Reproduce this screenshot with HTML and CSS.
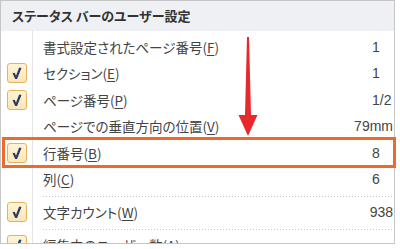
FILE: index.html
```html
<!DOCTYPE html>
<html lang="ja">

<head>
  <meta charset="UTF-8">
  <meta name="viewport" content="width=device-width, initial-scale=1.0">
  <title>ステータス バーのユーザー設定</title>
  <link rel="stylesheet" href="styles.css">
</head>

<body>

  <div class="shot">
    <div class="menu">
      <div class="menu-title">ステータス バーのユーザー設定</div>
      <ul class="menu-list">
        <li class="item">
          <span class="check"></span>
          <span class="label">書式設定されたページ番号(<u>F</u>)</span>
          <span class="value">1</span>
        </li>
        <li class="item">
          <span class="check on"><svg viewBox="0 0 20 20"><path d="M5 10.3 L7.5 9.6 L8.9 13 L12.4 4 L15 4.5 L10.1 16.6 L8 16.6 Z"/></svg></span>
          <span class="label">セクション(<u>E</u>)</span>
          <span class="value">1</span>
        </li>
        <li class="item">
          <span class="check on"><svg viewBox="0 0 20 20"><path d="M5 10.3 L7.5 9.6 L8.9 13 L12.4 4 L15 4.5 L10.1 16.6 L8 16.6 Z"/></svg></span>
          <span class="label">ページ番号(<u>P</u>)</span>
          <span class="value">1/2</span>
        </li>
        <li class="item">
          <span class="check"></span>
          <span class="label">ページでの垂直方向の位置(<u>V</u>)</span>
          <span class="value">79mm</span>
        </li>
        <li class="item">
          <span class="check on"><svg viewBox="0 0 20 20"><path d="M5 10.3 L7.5 9.6 L8.9 13 L12.4 4 L15 4.5 L10.1 16.6 L8 16.6 Z"/></svg></span>
          <span class="label">行番号(<u>B</u>)</span>
          <span class="value">8</span>
        </li>
        <li class="item">
          <span class="check"></span>
          <span class="label">列(<u>C</u>)</span>
          <span class="value">6</span>
        </li>
        <li class="sep"></li>
        <li class="item">
          <span class="check on"><svg viewBox="0 0 20 20"><path d="M5 10.3 L7.5 9.6 L8.9 13 L12.4 4 L15 4.5 L10.1 16.6 L8 16.6 Z"/></svg></span>
          <span class="label">文字カウント(<u>W</u>)</span>
          <span class="value">938</span>
        </li>
        <li class="sep"></li>
        <li class="item">
          <span class="check on"><svg viewBox="0 0 20 20"><path d="M5 10.3 L7.5 9.6 L8.9 13 L12.4 4 L15 4.5 L10.1 16.6 L8 16.6 Z"/></svg></span>
          <span class="label">編集中のユーザー数(<u>A</u>)</span>
          <span class="value"></span>
        </li>
      </ul>
    </div>

    <!-- annotations drawn over the menu -->
    <div class="mark-box"></div>
    <svg class="mark-arrow" viewBox="0 0 22 102">
      <path d="M10 1 L12 1 L14 79 L20.5 79 L11 100 L1.5 79 L8 79 Z"/>
    </svg>
  </div>

</body>

</html>
```

FILE: styles.css
```css
body {
  margin: 0;
  background: #fff;
  font-family: "Noto Sans CJK JP", "Noto Sans", sans-serif;
  color: #434343;
}

.shot {
  position: relative;
  width: 400px;
  height: 249px;
}

.menu {
  width: 393px;
  height: 242px;
  border: 1px solid #c6c6c6;
  background: #fff;
}

.menu-title {
  height: 30px;
  line-height: 30px;
  padding-left: 11px;
  background: #eef0f3;
  font-size: 13px;
  font-weight: bold;
  color: #333;
  font-feature-settings: "palt";
}

.menu-list {
  list-style: none;
  margin: 0;
  padding: 2.5px 0 0;
  height: 209.5px;
  overflow: hidden;
  background: linear-gradient(to right, transparent 31px, #e2e3e4 31px, #e2e3e4 32px, transparent 32px);
}

.item {
  display: grid;
  grid-template-columns: 32px 1fr auto;
  align-items: center;
  height: 26.5px;
}

.check {
  width: 20px;
  height: 20px;
  margin-left: 6px;
  box-sizing: border-box;
}

.check.on {
  border: 1px solid #e3b35f;
  border-radius: 3px;
  background: linear-gradient(#fef4d6, #fce7b4);
}

.check svg {
  display: block;
  width: 18px;
  height: 18px;
  fill: #2b3a6c;
}

.label {
  padding-left: 10px;
  font-size: 13.5px;
  font-feature-settings: "palt";
  white-space: nowrap;
}

.label u {
  text-underline-offset: 2px;
}

.value {
  min-width: 21px;
  padding-right: 1px;
  font-family: "Liberation Sans", Arial, sans-serif;
  font-size: 14px;
  color: #444;
}

.sep {
  height: 6.5px;
  margin-left: 42px;
  background: repeating-linear-gradient(to right, #c8c8c8 0 1px, transparent 1px 3px) 0 3px / 100% 1px no-repeat;
}

.mark-box {
  position: absolute;
  left: 2px;
  top: 137px;
  width: 388px;
  height: 25px;
  border: 3px solid #ec6b2c;
}

.mark-arrow {
  position: absolute;
  left: 237px;
  top: 36px;
  width: 22px;
  height: 102px;
  fill: #e7282c;
}
```
